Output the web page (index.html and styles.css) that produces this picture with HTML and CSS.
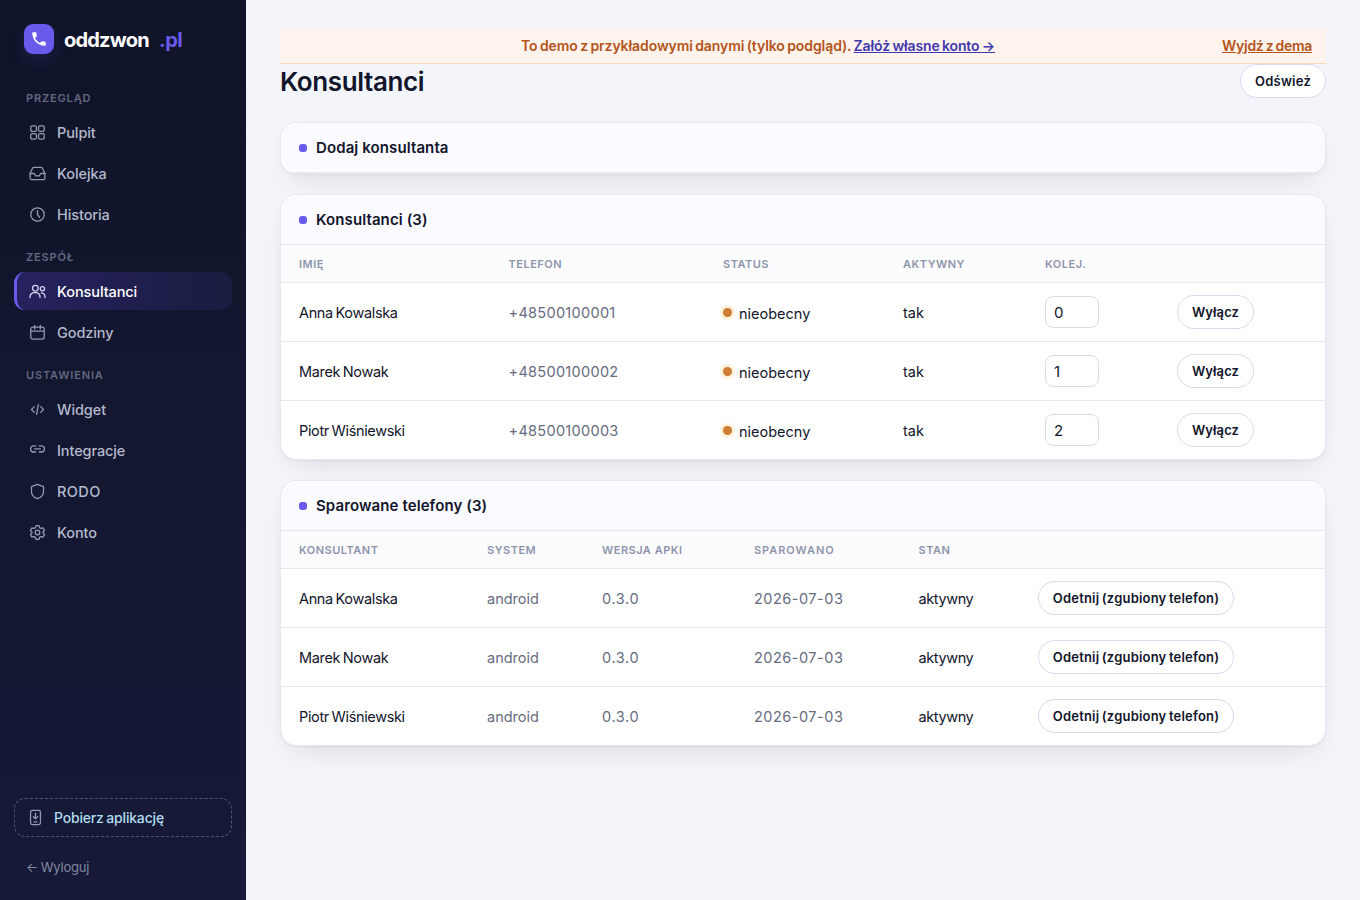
FILE: index.html
```html
<!DOCTYPE html>
<html lang="pl">
<head>
    <meta charset="UTF-8">
    <meta name="viewport" content="width=device-width, initial-scale=1.0">
    <title>Konsultanci</title>
    <link rel="stylesheet" href="styles.css">
</head>
<body>
    <div class="app">
        <aside class="sidebar">
            <div class="brand">
                <span class="brand-mark">
                    <svg viewBox="0 0 24 24" width="18" height="18" fill="currentColor"><path d="M6.6 10.8c1.4 2.8 3.8 5.1 6.6 6.6l2.2-2.2c.3-.3.7-.4 1-.2 1.1.4 2.3.6 3.6.6.6 0 1 .4 1 1V20c0 .6-.4 1-1 1C10.600 21 3 13.400 3 4c0-.6.4-1 1-1h3.500c.6 0 1 .4 1 1 0 1.300.2 2.500.6 3.600.1.300 0 .7-.2 1z"/></svg>
                </span>
                <span class="brand-name">oddzwon</span>
                <span class="brand-tld">.pl</span>
            </div>

            <nav class="nav">
                <div class="nav-label">Przegląd</div>
                <a class="nav-item" href="#">
                    <svg class="icon" viewBox="0 0 24 24"><rect x="2.500" y="2.500" width="8" height="8" rx="2"/><rect x="13.500" y="2.500" width="8" height="8" rx="2"/><rect x="2.500" y="13.500" width="8" height="8" rx="2"/><rect x="13.500" y="13.500" width="8" height="8" rx="2"/></svg>
                    <span class="nav-text">Pulpit</span>
                </a>
                <a class="nav-item" href="#">
                    <svg class="icon" viewBox="0 0 24 24"><path d="M1.500 12h6l2 3.500h5l2-3.500h6"/><path d="M5 4.700 1.500 12v6.500a2 2 0 0 0 2 2h17a2 2 0 0 0 2-2V12L19 4.700A2 2 0 0 0 17.200 3.500H6.800A2 2 0 0 0 5 4.700z"/></svg>
                    <span class="nav-text">Kolejka</span>
                </a>
                <a class="nav-item" href="#">
                    <svg class="icon" viewBox="0 0 24 24"><circle cx="12" cy="12" r="9.500"/><path d="M12 6.500V12l3 4"/></svg>
                    <span class="nav-text">Historia</span>
                </a>

                <div class="nav-label">Zespół</div>
                <a class="nav-item active" href="#">
                    <svg class="icon" viewBox="0 0 24 24"><circle cx="9" cy="7.500" r="4"/><path d="M1.500 20.500v-1a6 6 0 0 1 6-6h2a6 6 0 0 1 6 6v1"/><circle cx="19" cy="8" r="3"/><path d="M17.500 14a5 5 0 0 1 5 5v1.500"/></svg>
                    <span class="nav-text">Konsultanci</span>
                </a>
                <a class="nav-item" href="#">
                    <svg class="icon" viewBox="0 0 24 24"><rect x="2.500" y="4.500" width="19" height="17" rx="3"/><path d="M2.500 10h19M8 2v5M16 2v5"/></svg>
                    <span class="nav-text">Godziny</span>
                </a>

                <div class="nav-label">Ustawienia</div>
                <a class="nav-item" href="#">
                    <svg class="icon" viewBox="0 0 24 24"><path d="M7.500 8 3.500 12l4 4M16.500 8l4 4-4 4M13.200 5l-2.400 14"/></svg>
                    <span class="nav-text">Widget</span>
                </a>
                <a class="nav-item" href="#">
                    <svg class="icon" viewBox="0 0 24 24"><path d="M9.500 5.500h-3a4.300 4.300 0 0 0 0 8.600h3M14.500 5.500h3a4.300 4.300 0 0 1 0 8.600h-3M8 9.800h8"/></svg>
                    <span class="nav-text">Integracje</span>
                </a>
                <a class="nav-item" href="#">
                    <svg class="icon" viewBox="0 0 24 24"><path d="M12 2l8.500 3v6.500c0 5.500-3.600 9-8.500 10.500-4.900-1.500-8.500-5-8.500-10.500V5z"/></svg>
                    <span class="nav-text nav-wide">RODO</span>
                </a>
                <a class="nav-item" href="#">
                    <svg class="icon" viewBox="0 0 24 24"><circle cx="12" cy="12" r="3.200"/><path d="M9.800 2.200h4.400l.7 2.900 2 1.200 2.900-.9 2.200 3.800-2.200 2v1.600l2.200 2-2.200 3.800-2.900-.9-2 1.200-.7 2.900H9.800l-.7-2.900-2-1.200-2.900.9L2 14.800l2.200-2v-1.600L2 9.200l2.200-3.800 2.900.9 2-1.200z"/></svg>
                    <span class="nav-text">Konto</span>
                </a>
            </nav>

            <div class="sidebar-footer">
                <a class="download" href="#">
                    <svg class="icon" viewBox="0 0 24 24"><rect x="5" y="2" width="14" height="20" rx="2.500"/><path d="M12 6v8M9 11l3 3 3-3M10 18.300h4"/></svg>
                    <span class="download-text">Pobierz aplikację</span>
                </a>
                <a class="logout" href="#">← Wyloguj</a>
            </div>
        </aside>

        <main class="main">
            <div class="demo-bar">
                <div class="demo-text">To demo z przykładowymi danymi (tylko podgląd). <a class="demo-signup" href="#">Załóż własne konto →</a></div>
                <a class="demo-exit" href="#">Wyjdź z dema</a>
            </div>

            <header class="page-header">
                <h1>Konsultanci</h1>
                <button class="btn btn-refresh">Odśwież</button>
            </header>

            <section class="card">
                <h2 class="card-title">Dodaj konsultanta</h2>
            </section>

            <section class="card">
                <h2 class="card-title">Konsultanci (3)</h2>
                <table class="table agents">
                    <colgroup><col class="c-name"><col class="c-phone"><col class="c-status"><col class="c-active"><col class="c-order"><col></colgroup>
                    <thead>
                        <tr><th>Imię</th><th>Telefon</th><th>Status</th><th>Aktywny</th><th>Kolej.</th><th></th></tr>
                    </thead>
                    <tbody>
                        <tr>
                            <td class="name">Anna Kowalska</td>
                            <td class="muted phone">+48500100001</td>
                            <td><span class="status">nieobecny</span></td>
                            <td>tak</td>
                            <td class="control"><input class="order" type="text" value="0"></td>
                            <td class="control"><button class="btn btn-off">Wyłącz</button></td>
                        </tr>
                        <tr>
                            <td class="name">Marek Nowak</td>
                            <td class="muted phone">+48500100002</td>
                            <td><span class="status">nieobecny</span></td>
                            <td>tak</td>
                            <td class="control"><input class="order" type="text" value="1"></td>
                            <td class="control"><button class="btn btn-off">Wyłącz</button></td>
                        </tr>
                        <tr>
                            <td class="name">Piotr Wiśniewski</td>
                            <td class="muted phone">+48500100003</td>
                            <td><span class="status">nieobecny</span></td>
                            <td>tak</td>
                            <td class="control"><input class="order" type="text" value="2"></td>
                            <td class="control"><button class="btn btn-off">Wyłącz</button></td>
                        </tr>
                    </tbody>
                </table>
            </section>

            <section class="card">
                <h2 class="card-title">Sparowane telefony (3)</h2>
                <table class="table phones">
                    <colgroup><col class="p-name"><col class="p-system"><col class="p-version"><col class="p-date"><col class="p-state"><col></colgroup>
                    <thead>
                        <tr><th>Konsultant</th><th>System</th><th>Wersja apki</th><th class="th-date">Sparowano</th><th>Stan</th><th></th></tr>
                    </thead>
                    <tbody>
                        <tr>
                            <td class="name">Anna Kowalska</td>
                            <td class="muted">android</td>
                            <td class="muted version">0.3.0</td>
                            <td class="muted date">2026-07-03</td>
                            <td class="state">aktywny</td>
                            <td class="control"><button class="btn btn-unpair">Odetnij (zgubiony telefon)</button></td>
                        </tr>
                        <tr>
                            <td class="name">Marek Nowak</td>
                            <td class="muted">android</td>
                            <td class="muted version">0.3.0</td>
                            <td class="muted date">2026-07-03</td>
                            <td class="state">aktywny</td>
                            <td class="control"><button class="btn btn-unpair">Odetnij (zgubiony telefon)</button></td>
                        </tr>
                        <tr>
                            <td class="name">Piotr Wiśniewski</td>
                            <td class="muted">android</td>
                            <td class="muted version">0.3.0</td>
                            <td class="muted date">2026-07-03</td>
                            <td class="state">aktywny</td>
                            <td class="control"><button class="btn btn-unpair">Odetnij (zgubiony telefon)</button></td>
                        </tr>
                    </tbody>
                </table>
            </section>
        </main>
    </div>
</body>
</html>
```
FILE: styles.css
```css
* {
    box-sizing: border-box;
}

body {
    margin: 0;
    font-family: Inter, "Liberation Sans", sans-serif;
    font-size: 14.5px;
    line-height: 20px;
    color: #12152b;
    background-color: #f3f5fa;
}

.app {
    display: flex;
    min-height: 100vh;
}

/* Sidebar */
.sidebar {
    display: flex;
    flex-direction: column;
    flex: 0 0 246px;
    padding: 24px 14px 23px;
    background: linear-gradient(180deg, #101428, #161a38);
}

.brand {
    display: flex;
    align-items: center;
    gap: 10px;
    height: 30px;
    margin: 0 0 23px 10px;
    font-size: 20px;
    font-weight: 700;
    letter-spacing: -0.8px;
    color: #fff;
}

.brand-mark {
    display: flex;
    align-items: center;
    justify-content: center;
    width: 30px;
    height: 30px;
    border-radius: 9px;
    background-color: #695aec;
    box-shadow: 0 6px 16px rgba(105, 90, 236, 0.15);
}

.brand-name {
    width: 85px;
    padding-top: 1px;
}

.brand-tld {
    padding-top: 1px;
    letter-spacing: -0.5px;
    color: #695aec;
}

.nav-label {
    padding: 14px 12px 8px;
    font-size: 11px;
    font-weight: 600;
    line-height: 14px;
    letter-spacing: 0.85px;
    text-transform: uppercase;
    color: #626780;
}

.nav-item {
    display: flex;
    align-items: center;
    gap: 11px;
    height: 38px;
    margin-bottom: 3px;
    padding: 1px 12px 0;
    border-left: 3px solid transparent;
    border-radius: 11px;
    font-weight: 500;
    color: #b4b9cd;
    text-decoration: none;
}

.nav-text {
    letter-spacing: -0.1px;
}

.nav-wide {
    letter-spacing: 0.4px;
}

.nav-item.active {
    border-left-color: #695aec;
    color: #fff;
    background: linear-gradient(90deg, #26225f, #1a1c40);
}

.icon {
    width: 17px;
    height: 17px;
    flex: none;
    fill: none;
    stroke: #939ab2;
    stroke-width: 1.8;
    stroke-linecap: round;
    stroke-linejoin: round;
}

.active .icon {
    stroke: #d5d5f0;
}

.sidebar-footer {
    margin-top: auto;
}

.download {
    display: flex;
    align-items: center;
    gap: 10px;
    height: 39px;
    padding: 0 12px;
    border: 1px dashed #4b5872;
    border-radius: 11px;
    font-size: 14px;
    font-weight: 500;
    letter-spacing: -0.18px;
    word-spacing: -1px;
    color: #b0dcf0;
    text-decoration: none;
}

.logout {
    display: block;
    margin-top: 20px;
    padding-left: 12px;
    font-size: 13px;
    letter-spacing: -0.2px;
    word-spacing: -1px;
    color: #8187a0;
    text-decoration: none;
}

/* Main column */
.main {
    flex: 1;
    padding: 28px 34px;
}

.demo-bar {
    display: flex;
    align-items: center;
    height: 36px;
    padding: 0 14px;
    border-bottom: 1px solid #fadab4;
    background-color: #fff3ed;
    font-size: 14px;
    font-weight: 600;
    word-spacing: -1px;
    color: #b4541a;
}

.demo-text {
    flex: 1;
    letter-spacing: -0.09px;
    text-align: center;
}

.demo-signup {
    letter-spacing: -0.13px;
    color: #3f37ae;
}

.demo-exit {
    letter-spacing: -0.3px;
    color: #b4541a;
}

.page-header {
    display: flex;
    align-items: center;
    justify-content: space-between;
    height: 34px;
    margin-bottom: 24px;
}

h1 {
    margin: 0;
    padding-top: 1px;
    font-size: 26px;
    font-weight: 600;
    letter-spacing: -0.4px;
}

.btn {
    height: 34px;
    padding: 0 13px;
    border: 1px solid #d9dbee;
    border-radius: 17px;
    background-color: #fff;
    font-family: inherit;
    font-size: 13px;
    font-weight: 600;
    color: #12152b;
    white-space: nowrap;
}

.btn-refresh {
    width: 86px;
    letter-spacing: 0.25px;
}

.btn-off {
    width: 77px;
    letter-spacing: 0.1px;
}

.btn-unpair {
    width: 196px;
    letter-spacing: 0.2px;
    word-spacing: -1px;
}

.card {
    margin-bottom: 20px;
    border: 1px solid #e6e8f1;
    border-radius: 16px;
    background-color: #fff;
    box-shadow: 0 1px 2px rgba(18, 21, 43, 0.05), 0 12px 30px -12px rgba(18, 21, 43, 0.14);
    overflow: hidden;
}

.card-title {
    display: flex;
    align-items: center;
    gap: 9px;
    height: 50px;
    margin: 0;
    padding: 0 18px;
    border-bottom: 1px solid #e6e8f1;
    background-color: #fbfbff;
    font-size: 15px;
    font-weight: 600;
    letter-spacing: 0.1px;
}

.card-title::before {
    content: "";
    width: 8px;
    height: 8px;
    border-radius: 3px;
    background-color: #695aec;
}

/* Tables */
.table {
    width: 100%;
    border-collapse: separate;
    border-spacing: 0;
    table-layout: fixed;
}

.c-name { width: 209.5px; }
.c-phone { width: 214.5px; }
.c-status { width: 180px; }
.c-active { width: 142px; }
.c-order { width: 132px; }

.p-name { width: 188px; }
.p-system { width: 115px; }
.p-version { width: 152px; }
.p-date { width: 164.5px; }
.p-state { width: 119.5px; }

th {
    height: 38px;
    padding: 0 18px;
    border-bottom: 1px solid #e6e8f1;
    background-color: #fcfcff;
    font-size: 11px;
    font-weight: 600;
    letter-spacing: 0.5px;
    text-align: left;
    text-transform: uppercase;
    white-space: nowrap;
    color: #8d95ab;
}

.th-date {
    letter-spacing: 0.95px;
}

td {
    height: 59px;
    padding: 2px 18px 0;
    border-bottom: 1px solid #e6e8f1;
    white-space: nowrap;
}

tr:last-child td {
    height: 58px;
    border-bottom: none;
}

.control {
    padding-top: 0;
}

.name {
    letter-spacing: -0.36px;
    word-spacing: -1px;
}

.muted {
    color: #666c80;
}

.phone {
    letter-spacing: 0.3px;
}

.version {
    letter-spacing: 0.6px;
}

.date {
    letter-spacing: 0.5px;
}

.state {
    letter-spacing: -0.4px;
}

.status {
    display: inline-flex;
    align-items: center;
    gap: 7px;
    padding-top: 1px;
}

.status::before {
    content: "";
    width: 9px;
    height: 9px;
    margin-top: -2px;
    border-radius: 50%;
    background-color: #cf7c34;
    box-shadow: 0 0 0 3px #fdf2dd;
}

.order {
    display: block;
    width: 54px;
    height: 32px;
    padding: 0 8px;
    border: 1px solid #d9dce8;
    border-radius: 8px;
    background-color: #fff;
    font: inherit;
    font-size: 15px;
    color: inherit;
}
```
